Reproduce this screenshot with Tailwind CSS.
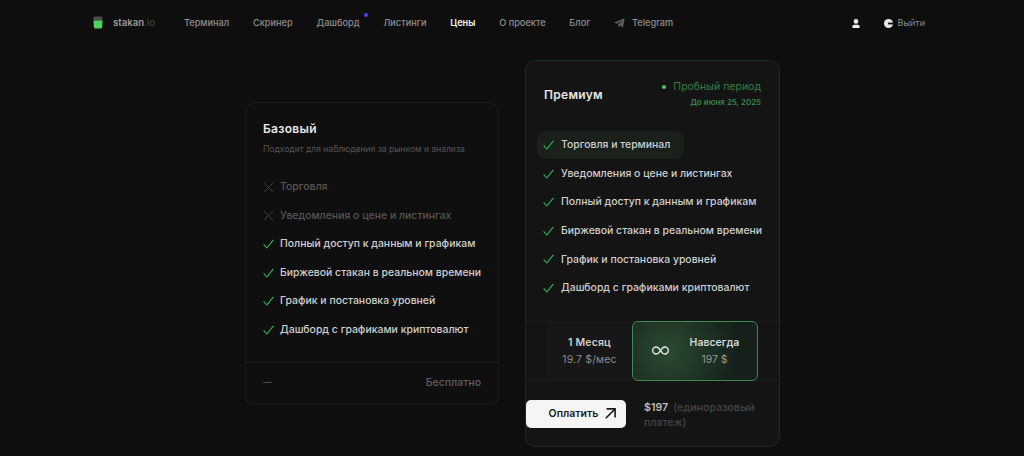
<!DOCTYPE html>
<html lang="ru">
<head>
    <meta charset="UTF-8">
    <title>stakan.io</title>
    <script src="https://cdn.jsdelivr.net/npm/@tailwindcss/browser@4"></script>
</head>
<body class="bg-[#0e0e0e] font-['Inter',sans-serif] h-[456px] overflow-hidden">

    <!-- Header -->
    <header class="h-[46px] flex items-center pl-[93px] pr-[99px] text-[9.2px] font-medium text-[#8f8f8f]">
        <a href="#" class="flex items-center gap-[10px] w-[91px] shrink-0 text-[9.6px]">
            <svg width="10" height="13" viewBox="0 0 10 13"><path d="M.5 1.5Q.5.5 1.5.5H8.5Q9.5.5 9.5 1.5V4.5H.5Z" fill="#4a4a4a"/><path d="M.5 4.5H9.5L9.2 11Q9 12.5 7.5 12.5H2.5Q1 12.5.8 11Z" fill="#4fd160"/></svg>
            <span class="font-semibold text-[#9a9a9a]">stakan<span class="font-normal text-[#4a4a4a]">.io</span></span>
        </a>
        <nav class="flex items-center gap-[23.8px]">
            <a href="#">Терминал</a>
            <a href="#">Скринер</a>
            <a href="#" class="relative">Дашборд<span class="absolute -right-[8px] -top-[3px] size-[4px] rounded-full bg-[#4343f0]"></span></a>
            <a href="#">Листинги</a>
            <a href="#" class="font-semibold text-[#f0f0f0]">Цены</a>
            <a href="#">О проекте</a>
            <a href="#">Блог</a>
            <a href="#" class="flex items-center gap-[7px]">
                <svg width="11" height="10" viewBox="0 0 11 10" fill="#5c5c5c"><path d="M0 4.6 10.6.2 9 9.6 6.2 7.6 4.6 9.4 4.2 6.4 8.4 2.4 3 5.8Z"/></svg>
                Telegram
            </a>
        </nav>
        <div class="ml-auto flex items-center gap-[24px]">
            <svg width="8" height="9" viewBox="0 0 8 9" fill="#eeeeee"><circle cx="4" cy="2.4" r="2.3"/><path d="M.4 9V7.4Q.4 5.8 2 5.8H6Q7.6 5.8 7.6 7.4V9Z"/></svg>
            <a href="#" class="flex items-center gap-[5px] font-normal text-[#8a8a8a] text-[9px]">
                <svg width="9" height="9" viewBox="0 0 9 9"><circle cx="4.5" cy="4.5" r="4.5" fill="#e8e8e8"/><rect x="4" y="3.6" width="5" height="1.8" fill="#111111"/></svg>
                Выйти
            </a>
        </div>
    </header>

    <!-- Pricing -->
    <main class="flex justify-center items-center gap-[26px] h-[415px] pl-[1px]">

        <!-- Basic plan -->
        <section class="w-[254px] h-[303px] rounded-[10px] border border-[#1a1a1a] bg-[#0f0f0f] flex flex-col">
            <div class="pt-[18px] px-[17px]">
                <h2 class="text-[12px] leading-[16px] font-semibold tracking-[0.3px] text-[#e6e6e6]">Базовый</h2>
                <p class="mt-[6px] text-[8.5px] leading-[12px] whitespace-nowrap text-[#555555]">Подходит для наблюдения за рынком и анализа</p>
            </div>
            <ul class="mt-[24px] px-[17px] text-[10.45px] font-medium whitespace-nowrap text-[#cfcfcf] flex flex-col gap-[12.5px]">
                <li class="h-[16px] flex items-center gap-[6px] text-[#555555]">
                    <svg width="11" height="11" viewBox="0 0 11 11" class="shrink-0" fill="none" stroke="#3d3d3d"><path d="M1 1 10 10M10 1 1 10"/></svg>
                    Торговля
                </li>
                <li class="h-[16px] flex items-center gap-[6px] text-[#555555]">
                    <svg width="11" height="11" viewBox="0 0 11 11" class="shrink-0" fill="none" stroke="#3d3d3d"><path d="M1 1 10 10M10 1 1 10"/></svg>
                    Уведомления о цене и листингах
                </li>
                <li class="h-[16px] flex items-center gap-[6px]">
                    <svg width="11" height="10" viewBox="0 0 11 10" class="shrink-0" fill="none" stroke="#2fb854" stroke-width="1.1"><path d="M.6 5.4 3.8 9 10.4.8"/></svg>
                    Полный доступ к данным и графикам
                </li>
                <li class="h-[16px] flex items-center gap-[6px]">
                    <svg width="11" height="10" viewBox="0 0 11 10" class="shrink-0" fill="none" stroke="#2fb854" stroke-width="1.1"><path d="M.6 5.4 3.8 9 10.4.8"/></svg>
                    Биржевой стакан в реальном времени
                </li>
                <li class="h-[16px] flex items-center gap-[6px]">
                    <svg width="11" height="10" viewBox="0 0 11 10" class="shrink-0" fill="none" stroke="#2fb854" stroke-width="1.1"><path d="M.6 5.4 3.8 9 10.4.8"/></svg>
                    График и постановка уровней
                </li>
                <li class="h-[16px] flex items-center gap-[6px]">
                    <svg width="11" height="10" viewBox="0 0 11 10" class="shrink-0" fill="none" stroke="#2fb854" stroke-width="1.1"><path d="M.6 5.4 3.8 9 10.4.8"/></svg>
                    Дашборд с графиками криптовалют
                </li>
            </ul>
            <div class="mt-auto h-[42px] border-t border-[#1a1a1a] px-[17px] pb-[2px] flex items-center justify-between text-[10.5px] font-medium text-[#5e5e5e]">
                <span class="text-[8.5px]">—</span>
                <span>Бесплатно</span>
            </div>
        </section>

        <!-- Premium plan -->
        <section class="w-[255px] h-[387px] rounded-[10px] border border-[#1c2a1f] bg-[#141414] flex flex-col">
            <div class="h-[70px] pl-[18px] pr-[18px] flex items-center justify-between">
                <h2 class="mt-[-3px] text-[12px] font-semibold tracking-[0.3px] text-[#e6e6e6]">Премиум</h2>
                <div class="text-right mt-[-4px]">
                    <div class="flex items-center justify-end gap-[7px] text-[10.5px] leading-[14px] text-[#327f43]">
                        <span class="size-[4px] rounded-full bg-[#4fc763]"></span>Пробный период
                    </div>
                    <div class="mt-[2px] text-[8px] leading-[12px] font-medium text-[#388f4b]">До июня 25, 2025</div>
                </div>
            </div>
            <ul class="px-[11px] text-[10.45px] font-medium whitespace-nowrap text-[#cfcfcf] flex flex-col gap-[0.6px]">
                <li class="h-[28px] w-[147px] pl-[6px] rounded-[9px] bg-[#1a211b] flex items-center gap-[7px]">
                    <svg width="11" height="10" viewBox="0 0 11 10" class="shrink-0" fill="none" stroke="#2fb854" stroke-width="1.1"><path d="M.6 5.4 3.8 9 10.4.8"/></svg>
                    Торговля и терминал
                </li>
                <li class="h-[28px] pl-[6px] flex items-center gap-[7px]">
                    <svg width="11" height="10" viewBox="0 0 11 10" class="shrink-0" fill="none" stroke="#2fb854" stroke-width="1.1"><path d="M.6 5.4 3.8 9 10.4.8"/></svg>
                    Уведомления о цене и листингах
                </li>
                <li class="h-[28px] pl-[6px] flex items-center gap-[7px]">
                    <svg width="11" height="10" viewBox="0 0 11 10" class="shrink-0" fill="none" stroke="#2fb854" stroke-width="1.1"><path d="M.6 5.4 3.8 9 10.4.8"/></svg>
                    Полный доступ к данным и графикам
                </li>
                <li class="h-[28px] pl-[6px] flex items-center gap-[7px]">
                    <svg width="11" height="10" viewBox="0 0 11 10" class="shrink-0" fill="none" stroke="#2fb854" stroke-width="1.1"><path d="M.6 5.4 3.8 9 10.4.8"/></svg>
                    Биржевой стакан в реальном времени
                </li>
                <li class="h-[28px] pl-[6px] flex items-center gap-[7px]">
                    <svg width="11" height="10" viewBox="0 0 11 10" class="shrink-0" fill="none" stroke="#2fb854" stroke-width="1.1"><path d="M.6 5.4 3.8 9 10.4.8"/></svg>
                    График и постановка уровней
                </li>
                <li class="h-[28px] pl-[6px] flex items-center gap-[7px]">
                    <svg width="11" height="10" viewBox="0 0 11 10" class="shrink-0" fill="none" stroke="#2fb854" stroke-width="1.1"><path d="M.6 5.4 3.8 9 10.4.8"/></svg>
                    Дашборд с графиками криптовалют
                </li>
            </ul>
            <!-- Period selector -->
            <div class="mt-[19px] h-[60px] border-y border-[#1c1c1c] pl-[21px] pr-[21px] flex">
                <div class="w-[85px] bg-[#171717] flex flex-col items-center justify-center gap-[3px] text-[10.5px] tracking-[0.15px]">
                    <span class="font-semibold text-[#cfcfcf] leading-[14px] mt-[1px]">1 Месяц</span>
                    <span class="text-[#8a8a8a] leading-[14px]">19.7 $/мес</span>
                </div>
                <div class="-my-px w-[126px] rounded-[6px] border border-[#3f8a4e] bg-[radial-gradient(circle_at_28%_50%,#2b4a30,#15201a_75%)] flex items-center pl-[19px]">
                    <svg width="17" height="9" viewBox="0 0 17 9" fill="none" stroke="#e8e8e8" stroke-width="1.4"><path d="M8.5 4.5C7 2 5.8 1 4.2 1A3.5 3.5 0 0 0 4.2 8C5.8 8 7 7 8.5 4.5C10 2 11.2 1 12.8 1A3.5 3.5 0 0 1 12.8 8C11.2 8 10 7 8.5 4.5Z"/></svg>
                    <div class="ml-[21px] w-[49px] flex flex-col items-center gap-[3px] text-[10.5px]">
                        <span class="font-semibold text-[#d6d6d6] leading-[14px] mt-[1px]">Навсегда</span>
                        <span class="text-[#8f9a90] leading-[14px]">197 $</span>
                    </div>
                </div>
            </div>
            <!-- Pay -->
            <div class="mt-[19px] flex items-start">
                <button class="w-[100px] h-[28px] rounded-[5px] bg-[#f5f5f5] flex items-center justify-center gap-[7px] pl-[13px] text-[10.5px] font-semibold text-[#1a1a1a]">
                    Оплатить
                    <svg width="11" height="11" viewBox="0 0 11 11" fill="none" stroke="#1a1a1a" stroke-width="1.6"><path d="M.8 10.2 10 1M1.6.9H10.1V9.4"/></svg>
                </button>
                <div class="ml-[18px] text-[10.5px] leading-[15px] font-medium tracking-[0.1px] text-[#444444] whitespace-nowrap">
                    <div class="flex gap-[5px]"><span class="font-semibold text-[#bdbdbd]">$197</span><span>(единоразовый</span></div>
                    <div>платеж)</div>
                </div>
            </div>
        </section>
    </main>
</body>
</html>
